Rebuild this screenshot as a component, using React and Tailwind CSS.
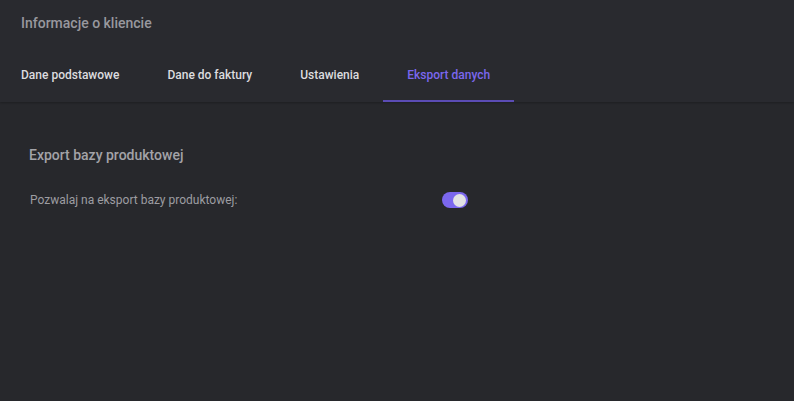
import React, { useState } from 'react'

const tabs = ['Dane podstawowe', 'Dane do faktury', 'Ustawienia', 'Eksport danych']

export default function App() {
  const [active, setActive] = useState(3)
  const [allowExport, setAllowExport] = useState(true)

  return (
    <div
      className="w-[794px] h-[401px] bg-[#27282c] overflow-hidden"
      style={{ fontFamily: 'Roboto, "Liberation Sans", sans-serif' }}
    >
      <div className="bg-[#292a2f] shadow-[0_1px_2px_rgba(0,0,0,0.25)]">
        <div className="px-[21px] pt-[13px] h-[50px] text-[14px] font-medium text-[#98989e]">
          Informacje o kliencie
        </div>
        <div className="flex ml-[-3px]">
          {tabs.map((tab, i) => (
            <button
              key={tab}
              onClick={() => setActive(i)}
              className={
                'h-[52px] px-6 text-[12px] font-medium border-b-2 ' +
                (i === active
                  ? 'text-[#7b67ee] border-[#5b4cb5]'
                  : 'text-[#dcdcdf] border-transparent')
              }
            >
              {tab}
            </button>
          ))}
        </div>
      </div>

      <div className="px-[29px] pt-[43px]">
        <h2 className="text-[14px] font-medium text-[#a3a3a8]">
          Export bazy produktowej
        </h2>
        <div className="flex items-center mt-[25px] w-[439px] justify-between">
          <span className="text-[12px] text-[#9d9da2] pl-px">
            Pozwalaj na eksport bazy produktowej:
          </span>
          <button
            onClick={() => setAllowExport((v) => !v)}
            className={
              'w-[26px] h-[16px] rounded-full flex items-center px-[2px] ' +
              (allowExport ? 'bg-[#7b67ee] justify-end' : 'bg-[#55565c] justify-start')
            }
          >
            <span className="w-[13px] h-[13px] rounded-full bg-[#e2e2e4]"></span>
          </button>
        </div>
      </div>
    </div>
  )
}
